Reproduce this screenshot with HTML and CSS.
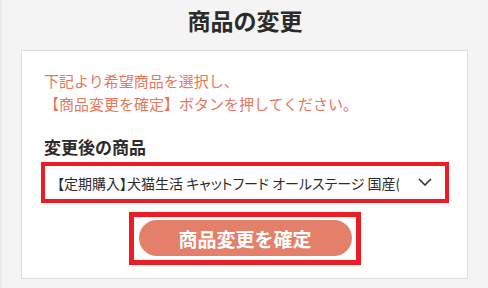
FILE: index.html
```html
<!DOCTYPE html>
<html lang="ja">
<head>
<meta charset="utf-8">
<title>商品の変更</title>
<link rel="stylesheet" href="styles.css">
</head>
<body>
<div class="page">
  <h1 class="title">商品の変更</h1>
  <div class="card">
    <p class="notice">下記より希望商品を選択し、<br>【商品変更を確定】ボタンを押してください。</p>
    <div class="label">変更後の商品</div>
    <div class="select-wrap">
      <select class="select">
        <option>【定期購入】犬猫生活 キャットフード オールステージ 国産(チキン) 1.5kg</option>
      </select>
      <svg class="chevron" width="14" height="8" viewBox="0 0 14 8" aria-hidden="true">
        <path d="M1 1 L7 7 L13 1" fill="none" stroke="#333" stroke-width="1.6"/>
      </svg>
    </div>
    <div class="actions">
      <div class="btn-frame">
        <button class="btn" type="button">商品変更を確定</button>
      </div>
    </div>
  </div>
</div>
</body>
</html>
```
FILE: styles.css
```css
html, body {
  margin: 0;
  padding: 0;
}
body {
  width: 488px;
  height: 288px;
  overflow: hidden;
  background: #f4f4f4;
  font-family: "Noto Sans CJK JP", "Noto Sans", sans-serif;
  color: #2b2b2b;
}
.page {
  height: 288px;
  border-left: 2px solid #e6ebf0;
  box-sizing: border-box;
}
.title {
  margin: 0 0 14px;
  padding-top: 4px;
  font-size: 23px;
  line-height: 32px;
  font-weight: 700;
  text-align: center;
  color: #2b2b2b;
}
.card {
  box-sizing: border-box;
  width: 447px;
  margin-left: 19px;
  background: #fff;
  border: 1px solid #dedede;
  padding: 18px 22px 18px 22px;
}
.notice {
  margin: 0;
  font-size: 15px;
  line-height: 23px;
  color: #e6775a;
}
.label {
  margin-top: 20px;
  font-size: 17px;
  line-height: 24px;
  font-weight: 700;
  color: #2b2b2b;
}
.select-wrap {
  position: relative;
  margin: 7px 0 0 1px;
  width: 400px;
  height: 33px;
  outline: 4px solid #ed1c24;
}
.select {
  appearance: none;
  -webkit-appearance: none;
  display: block;
  width: 100%;
  height: 33px;
  margin: 0;
  border: none;
  background: #fff;
  padding: 0 46px 0 12px;
  font-family: "Noto Sans CJK JP", sans-serif;
  font-size: 14px;
  font-feature-settings: "palt";
  color: #2b2b2b;
  outline: none;
}
.chevron {
  position: absolute;
  left: 373px;
  top: 12px;
}
.actions {
  margin-top: 18px;
  display: flex;
  justify-content: center;
}
.btn-frame {
  padding: 3px 4px 4px 5px;
  outline: 5px solid #ed1c24;
  background: #fff;
}
.btn {
  display: block;
  width: 213px;
  height: 36px;
  border: none;
  border-radius: 18px;
  background: #e4806a;
  color: #fff;
  font-family: "Noto Sans CJK JP", sans-serif;
  font-size: 19px;
  font-weight: 700;
  padding: 0;
  cursor: pointer;
}
```
